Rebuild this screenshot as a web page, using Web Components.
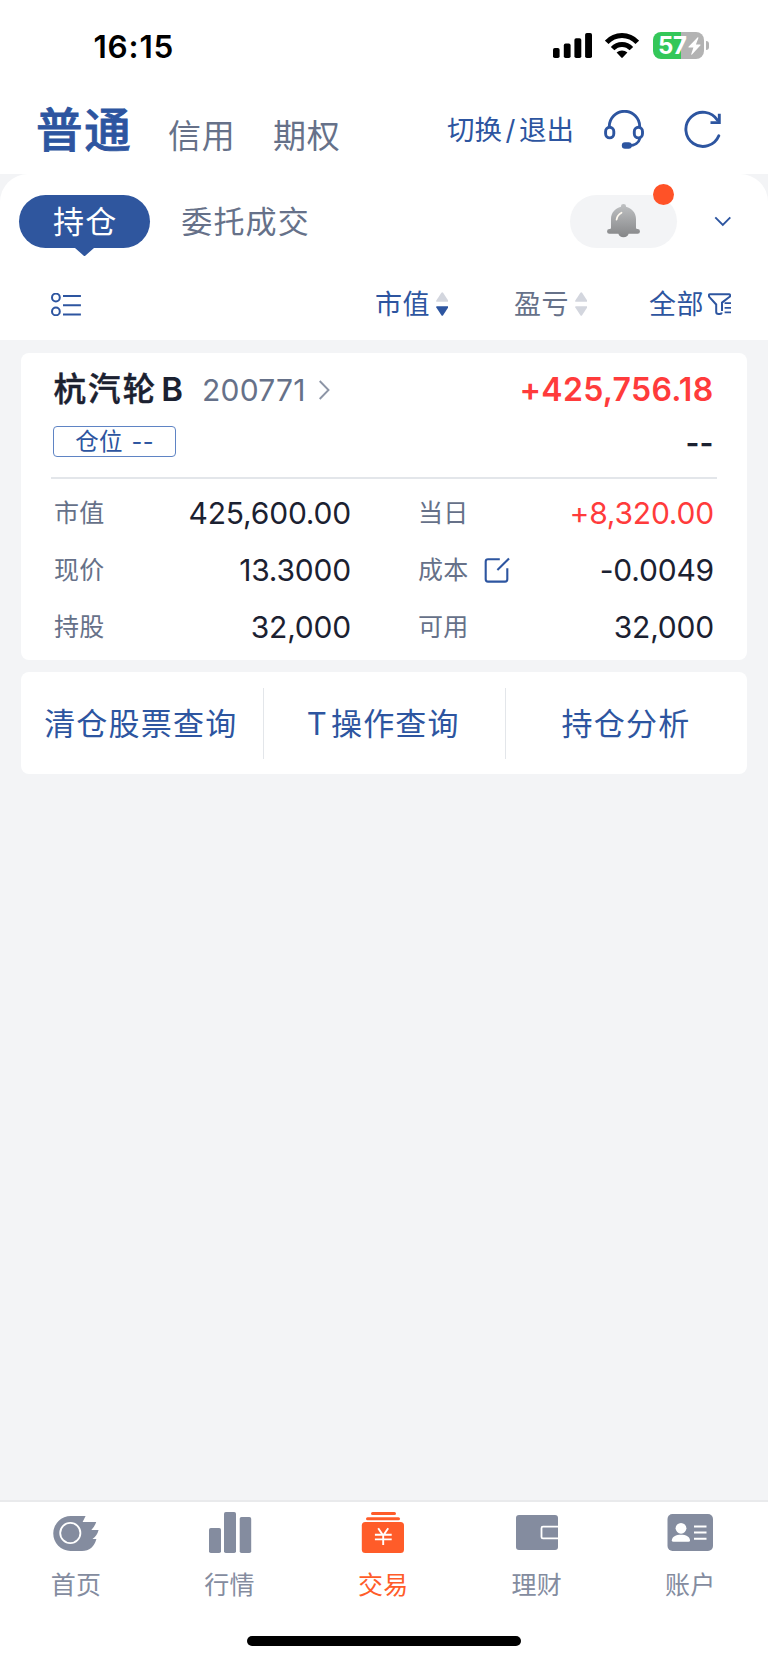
<!DOCTYPE html>
<html lang="zh-CN">
<head>
<meta charset="utf-8">
<title>持仓</title>
<style>
html,body{margin:0;padding:0}
body{
  --blue:#2d55a0;--slate:#667189;--ink:#1b2131;--red:#ff3b3b;--orange:#ff5c29;--tab:#848c9f;--bg:#f3f4f6;
  font-family:Inter,"Noto Sans CJK SC",sans-serif;color:var(--ink);background:var(--bg);
}
</style>
</head>
<body>
<trade-app></trade-app>
<script>
const define = (name, html) => customElements.define(name, class extends HTMLElement {
  constructor() {
    super();
    const t = document.createElement('template');
    t.innerHTML = html;
    this.attachShadow({mode: 'open'}).append(t.content.cloneNode(true));
  }
});

const ICONS = {
  signal: ['0 0 39 25', `<g fill="#000"><rect x="0" y="15" width="6.6" height="10" rx="1.8"/><rect x="10.8" y="10.6" width="6.8" height="14.4" rx="1.8"/><rect x="21.4" y="5.2" width="6.9" height="19.8" rx="1.8"/><rect x="32.1" y="0" width="6.9" height="25" rx="1.8"/></g>`],
  wifi: ['0 0 34 25', `<g fill="none" stroke="#000" stroke-width="4.900"><path d="M1.7 9.3C10 .2 24 .2 32.300 9.300"/><path d="M7.600 15.600C12.800 10.100 21.200 10.100 26.400 15.600"/></g><path fill="#000" d="M11.600 19.600C14.700 16.700 19.300 16.700 22.400 19.600L17.700 24.600Q17 25.200 16.300 24.600Z"/>`],
  bolt: ['0 0 13 18', `<path fill="#fff" d="M9.700.3L.5 9.800Q.1 10.400.8 10.400H5.400L3.200 17.200Q3.200 18 4 17.600L12.500 8.200Q12.800 7.500 12.100 7.500H7.900L10.400.900Q10.500 0 9.700.300Z"/>`],
  headset: ['604 109 40 39', `<g fill="none" stroke="#2d55a0" stroke-width="2.900"><path d="M609.300 126v-.5a15.200 15.200 0 0 1 30.400 0v.5"/><rect x="605.600" y="126.300" width="8.200" height="10.600" rx="4.100"/><rect x="634.300" y="126.300" width="8.200" height="10.600" rx="4.100"/><path d="M640 137C639 141.500 634.500 144.500 629 144.700"/></g><rect x="621.800" y="141.300" width="10" height="6.400" rx="3.200" fill="#2d55a0"/>`],
  refresh: ['684 109 38 39', `<g fill="none" stroke="#2d55a0" stroke-width="2.900"><path d="M718.800 134.800A17.100 17.100 0 1 1 717.500 119.300" stroke-linecap="round"/><path d="M719.300 112.800v8.800h-8.800"/></g>`],
  bell: ['607 204 33 34', `<defs><linearGradient id="g" x1="0" y1="0" x2="0" y2="1"><stop offset="0" stop-color="#bfc1c3"/><stop offset="1" stop-color="#858688"/></linearGradient></defs><path fill="url(#g)" d="M623.500 204a2.500 2.500 0 0 1 2.500 2.800C632 208.300 636 213 636 219V228Q636 229 637.500 229A2.400 2.400 0 0 1 637.600 233.800H628.600A5.200 4.300 0 0 1 618.400 233.800H609.400A2.400 2.400 0 0 1 609.500 229Q611 229 611 228V219C611 213 615 208.300 621 206.800A2.500 2.500 0 0 1 623.500 204Z"/><path d="M616.600 219.500Q617.200 215 621.500 212.700" fill="none" stroke="#fffaf0" stroke-width="1.800" stroke-linecap="round"/>`],
  down: ['714 216 18 11', `<path d="M715.300 217.300l7.500 7.500 7.500-7.500" fill="none" stroke="#2d55a0" stroke-width="1.900"/>`],
  list: ['51 293 30 23', `<g fill="none" stroke="#2d55a0" stroke-width="2"><circle cx="55.900" cy="297.500" r="3.900"/><circle cx="55.900" cy="311.400" r="3.900"/><path d="M63 296h17.900M63 305.300h17.900M63 314.500h17.900"/></g>`],
  funnel: ['708 293 23 22', `<g fill="none" stroke="#2d55a0" stroke-width="2"><path d="M721.800 312.500Q721.500 314 720 314H718.500Q716.200 314 716.200 312V304.500L709.200 296.800Q708.300 294.200 710 294.200H729Q730.600 294.200 730 296.500L722 302.600V311"/><path d="M724.600 303.200h6.400M724.600 307.800h6.400M724.600 312.300h6.400" stroke-width="1.700"/></g>`],
  right: ['316 380 12 20', `<path d="M317.700 381l8.800 9-8.800 9" fill="none" stroke="#8d95a6" stroke-width="1.900"/>`],
  edit: ['484 556 26 26', `<g fill="none" stroke="#2d55a0" stroke-width="2.100"><path d="M499.800 558.200H488Q485.700 558.200 485.700 560.500V578.200Q485.700 580.600 488 580.600H505Q507.300 580.600 507.300 578.200V567.200"/><path d="M497.400 569.100L509 557.600"/></g>`],
  home: ['53 1510 47 44', `<path fill="#848c9f" d="M71 1516H85.600L82.600 1522H96.200Q94.500 1527 91.300 1530H98.600Q97 1536 92.500 1539H96.400Q93 1551 82 1551H70.500A17.500 17.500 0 0 1 71 1516Z"/><circle cx="70.300" cy="1533" r="10.100" fill="none" stroke="#fff" stroke-width="1.800"/>`],
  bars: ['207 1510 46 44', `<g fill="#848c9f"><rect x="209" y="1528" width="12" height="25" rx="1.800"/><rect x="224" y="1512" width="12" height="41" rx="1.800"/><rect x="239.700" y="1517" width="11.500" height="36" rx="1.800"/></g>`],
  trade: ['360 1510 46 44', `<g fill="#ff5c29"><rect x="371" y="1512" width="25" height="3" rx="1.500"/><rect x="366" y="1517.200" width="34" height="3" rx="1.500"/><rect x="361.800" y="1522" width="42.200" height="31" rx="3.500"/></g><path d="M378.200 1528.200l5 7.300 5-7.300M374.900 1534.700h16.800M374.900 1539.400h16.800M383.200 1535v10" fill="none" stroke="#fff" stroke-width="1.900"/>`],
  wallet: ['513 1510 46 44', `<rect x="515" y="1515" width="42" height="35" rx="3" fill="#848c9f"/><path d="M557 1526.700H542Q540.500 1526.700 540.500 1528.200V1536.900Q540.500 1538.400 542 1538.400H557" fill="none" stroke="#fff" stroke-width="1.800"/>`],
  account: ['667 1510 46 44', `<rect x="667.500" y="1514" width="45.500" height="37" rx="5" fill="#848c9f"/><g fill="#fff"><circle cx="681" cy="1528.300" r="5.400"/><path d="M671.800 1540.500C671.800 1536.500 676 1534.700 681 1534.700S690 1536.500 690 1540.500Q690 1541.700 688.500 1541.700H673.500Q671.800 1541.700 671.800 1540.500Z"/></g><path d="M694 1526.500h12.500M694 1532.500h12.500M694 1538.700h12.500" stroke="#fff" stroke-width="2"/>`],
};
customElements.define('ui-icon', class extends HTMLElement {
  constructor() { super(); this.attachShadow({mode: 'open'}); }
  connectedCallback() {
    const [box, body] = ICONS[this.getAttribute('name')];
    const [, , w, h] = box.split(' ');
    this.shadowRoot.innerHTML = `<style>:host{display:block;flex:none;width:${w}px;height:${h}px}svg{display:block}</style><svg width="${w}" height="${h}" viewBox="${box}">${body}</svg>`;
  }
});

define('status-bar', `<style>
:host{display:flex;height:92px;box-sizing:border-box;background:#fff;align-items:center;padding:0 59px 1px 93.500px;color:#000}
.time{font-size:31.500px;font-weight:600;line-height:36px;letter-spacing:.8px;margin-right:auto;padding-top:2px}
.sig{margin-right:13.500px}.wifi{margin-right:14px}
.bat{width:51px;height:27px;border-radius:8px;background:linear-gradient(90deg,#34c759 28.500px,#b3b3b3 28.500px);display:flex;align-items:center;box-sizing:border-box;padding-left:5px;color:#fff;font-size:24px;font-weight:700;line-height:27px;letter-spacing:-.4px}
.bat ui-icon{margin-left:1px}
.cap{width:3.500px;height:9px;border-radius:0 4px 4px 0;background:#b3b3b3;margin-left:1.500px}
</style><div class="time">16:15</div><ui-icon class="sig" name="signal"></ui-icon><ui-icon class="wifi" name="wifi"></ui-icon><div class="bat">57<ui-icon name="bolt"></ui-icon></div><div class="cap"></div>`);

define('account-header', `<style>
:host{display:flex;height:82px;background:#fff;box-sizing:border-box;padding:0 46px 0 36px;color:var(--slate);font-size:33px;line-height:40px;white-space:nowrap}
.on{font-size:46.500px;font-weight:500;-webkit-text-stroke:.8px var(--blue);color:var(--blue);letter-spacing:1.700px;line-height:56px;width:132px;margin-top:10px}
.t{width:105px;margin-top:24px;letter-spacing:.8px}
.sw{margin:19px 30px 0 auto;font-size:27.500px;line-height:38px;color:var(--blue)}
.sw i{font-style:normal;display:inline-block;width:17px;text-align:center}
ui-icon{margin-top:17.500px}.hs{margin-right:40px}
</style><div class="on">普通</div><div class="t">信用</div><div class="t">期权</div><div class="sw">切换<i>/</i>退出</div><ui-icon class="hs" name="headset"></ui-icon><ui-icon name="refresh"></ui-icon>`);

define('view-tabs', `<style>
:host{display:flex;height:94px;background:#fff;box-sizing:border-box;border-radius:28px 28px 0 0;padding:20.500px 36px 0 19.200px;font-size:31px;line-height:53px;letter-spacing:1.200px;color:var(--slate);white-space:nowrap}
.on{position:relative;width:131px;height:53.500px;border-radius:27px;background:#2f569e;color:#fff;text-align:center;margin-right:31px;text-indent:1px}
.on svg{position:absolute;left:55.500px;top:53px}
.bell{position:relative;width:107px;height:53px;border-radius:27px;background:var(--bg);margin:0 37px 0 auto;display:grid;place-items:center}
.dot{position:absolute;width:21px;height:21px;border-radius:50%;background:#ff5227;left:83px;top:-11px}
.dn{margin-top:21.500px}
</style><div class="on">持仓<svg width="20" height="9"><path d="M0 0H19L10.500 7.500Q9.500 8.500 8.500 7.500Z" fill="#2f569e"/></svg></div><div>委托成交</div><div class="bell"><ui-icon name="bell"></ui-icon><span class="dot"></span></div><ui-icon class="dn" name="down"></ui-icon>`);

define('sort-mark', `<style>
:host{display:block;flex:none;width:12.500px;height:24px}svg{display:block}
.u{fill:#d3d6de}.d{fill:var(--down,#d3d6de)}
</style><svg width="12.5" height="24"><path class="u" d="M5.400.8Q6.250-.3 7.100.8L12.200 8.600Q12.700 9.800 11.500 9.800H1Q-.2 9.800.3 8.600Z"/><path class="d" d="M5.400 23.200Q6.250 24.300 7.100 23.200L12.200 15.400Q12.700 14.200 11.500 14.200H1Q-.2 14.200.3 15.400Z"/></svg>`);

define('sort-bar', `<style>
:host{display:flex;align-items:center;height:72px;padding:0 36px 0 51px;box-sizing:border-box;background:#fff;font-size:27px;line-height:36px;letter-spacing:.5px;color:var(--slate);white-space:nowrap}
.a{color:var(--blue);--down:#2d55a0;margin-left:auto;width:139px}.b{width:135px}.c{color:var(--blue);width:83px}
.a,.b,.c{display:flex;align-items:center}
span{padding-top:2px}
sort-mark{margin-left:5.500px}.c ui-icon{margin-left:4px}
</style><ui-icon name="list"></ui-icon><div class="a"><span>市值</span><sort-mark></sort-mark></div><div class="b"><span>盈亏</span><sort-mark></sort-mark></div><div class="c"><span>全部</span><ui-icon name="funnel"></ui-icon></div>`);

define('stat-cell', `<style>
:host{display:flex;align-items:center;height:57.300px;line-height:36px;font-size:30px;white-space:nowrap;letter-spacing:-.2px}
.l{font-size:25px;letter-spacing:.3px;color:var(--slate);margin-right:auto;display:flex;align-items:center;gap:15px}
</style><div class="l"><slot name="label"></slot><slot name="icon"></slot></div><slot></slot>`);

define('holding-card', `<style>
:host{display:block;height:307px;box-sizing:border-box;background:#fff;border-radius:8px;padding:16.500px 30px 0;white-space:nowrap}
.r{display:flex;align-items:center;padding:0 3.500px 0 2px}
.head{height:41px}
.name{font-size:32.500px;font-weight:500;-webkit-text-stroke:.5px var(--ink);letter-spacing:2.100px;line-height:40px;margin-left:.5px}
.b{font-weight:600;font-size:33px;margin-left:4px;letter-spacing:0;-webkit-text-stroke:0}
.code{font-size:30px;letter-spacing:.2px;color:var(--slate);line-height:40px;margin-left:19px;margin-right:12px}
.pl{font-size:32px;font-weight:600;letter-spacing:.3px;color:var(--red);margin-left:auto}
.sub{height:32px;margin-top:15.500px}
.tag{width:123px;height:31px;border:1px solid #5f84c4;border-radius:4px;box-sizing:border-box;color:var(--blue);font-size:23.500px;line-height:29px;letter-spacing:.4px;word-spacing:1.500px;text-align:center}
.dash{font-size:30px;font-weight:600;margin-left:auto;padding-top:2px}
.line{height:2px;background:#e3e6ea;margin:19px 0 5.500px}
.grid{display:grid;grid-template-columns:297px 296px;column-gap:67px;padding-left:3px}
.up{color:var(--red)}
</style>
<div class="r head"><div class="name">杭汽轮<span class="b">B</span></div><div class="code">200771</div><ui-icon name="right"></ui-icon><div class="pl">+425,756.18</div></div>
<div class="r sub"><div class="tag">仓位 --</div><div class="dash">--</div></div>
<div class="line"></div>
<div class="grid">
<stat-cell><span slot="label">市值</span>425,600.00</stat-cell><stat-cell class="up"><span slot="label">当日</span>+8,320.00</stat-cell>
<stat-cell><span slot="label">现价</span>13.3000</stat-cell><stat-cell><span slot="label">成本</span><ui-icon slot="icon" name="edit"></ui-icon>-0.0049</stat-cell>
<stat-cell><span slot="label">持股</span>32,000</stat-cell><stat-cell><span slot="label">可用</span>32,000</stat-cell>
</div>`);

define('query-links', `<style>
:host{display:grid;grid-template-columns:242px 242px 242px;align-items:center;height:102px;background:#fff;border-radius:8px;color:var(--blue);font-size:31px;letter-spacing:1.200px;text-align:center;white-space:nowrap}
div{height:71px;line-height:71px;box-sizing:border-box;padding-right:2.500px}
div+div{border-left:1px solid #e3e6ea}
div+div+div{padding-right:1px}
span{margin-right:3px}
</style><div>清仓股票查询</div><div><span>T</span>操作查询</div><div>持仓分析</div>`);

define('nav-item', `<style>
:host{display:flex;flex-direction:column;align-items:center;flex:1;color:var(--tab);font-size:25px;line-height:34px;letter-spacing:.3px;padding-top:8px}
.t{margin-top:14px}
</style><slot name="icon"></slot><div class="t"><slot></slot></div>`);

define('nav-bar', `<style>
:host{display:block;height:163px;box-sizing:border-box;background:#fff;border-top:2px solid #e9eaec}
nav{display:flex;height:134px;box-sizing:border-box;margin:0 .8px 0 -.8px}
.home{width:274px;height:10px;border-radius:5px;background:#000;margin:0 auto}
.on{color:var(--orange)}
</style><nav>
<nav-item><ui-icon slot="icon" name="home"></ui-icon>首页</nav-item>
<nav-item><ui-icon slot="icon" name="bars"></ui-icon>行情</nav-item>
<nav-item class="on"><ui-icon slot="icon" name="trade"></ui-icon>交易</nav-item>
<nav-item><ui-icon slot="icon" name="wallet"></ui-icon>理财</nav-item>
<nav-item><ui-icon slot="icon" name="account"></ui-icon>账户</nav-item>
</nav><div class="home"></div>`);

define('trade-app', `<style>
:host{display:flex;flex-direction:column;width:768px;height:1663px;background:var(--bg);overflow:hidden}
main{flex:1;padding:12.500px 21px 0;display:flex;flex-direction:column;gap:12.500px}
</style><status-bar></status-bar><account-header></account-header><view-tabs></view-tabs><sort-bar></sort-bar>
<main><holding-card></holding-card><query-links></query-links></main><nav-bar></nav-bar>`);
</script>
</body>
</html>
